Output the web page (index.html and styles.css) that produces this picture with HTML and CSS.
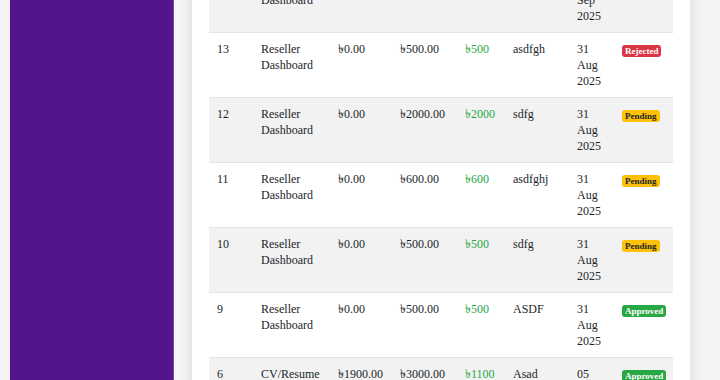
FILE: index.html
```html
<!DOCTYPE html>
<html>
<head>
<meta charset="utf-8">
<link rel="stylesheet" href="styles.css">
</head>
<body>
<div class="layout">
  <aside class="sidebar"></aside>
  <main class="main">
    <div class="card">
      <table class="orders">
        <colgroup>
          <col class="c-id"><col class="c-svc"><col class="c-paid"><col class="c-total"><col class="c-due"><col class="c-name"><col class="c-date"><col class="c-status">
        </colgroup>
        <tbody>
          <tr class="striped"><td>14</td><td>Reseller Dashboard</td><td>৳0.00</td><td>৳500.00</td><td class="due">৳500</td><td>asdf</td><td>01 Sep 2025</td><td><span class="badge pending">Pending</span></td></tr>
          <tr><td>13</td><td>Reseller Dashboard</td><td>৳0.00</td><td>৳500.00</td><td class="due">৳500</td><td>asdfgh</td><td>31 Aug 2025</td><td><span class="badge rejected">Rejected</span></td></tr>
          <tr class="striped"><td>12</td><td>Reseller Dashboard</td><td>৳0.00</td><td>৳2000.00</td><td class="due">৳2000</td><td>sdfg</td><td>31 Aug 2025</td><td><span class="badge pending">Pending</span></td></tr>
          <tr><td>11</td><td>Reseller Dashboard</td><td>৳0.00</td><td>৳600.00</td><td class="due">৳600</td><td>asdfghj</td><td>31 Aug 2025</td><td><span class="badge pending">Pending</span></td></tr>
          <tr class="striped"><td>10</td><td>Reseller Dashboard</td><td>৳0.00</td><td>৳500.00</td><td class="due">৳500</td><td>sdfg</td><td>31 Aug 2025</td><td><span class="badge pending">Pending</span></td></tr>
          <tr><td>9</td><td>Reseller Dashboard</td><td>৳0.00</td><td>৳500.00</td><td class="due">৳500</td><td>ASDF</td><td>31 Aug 2025</td><td><span class="badge approved">Approved</span></td></tr>
          <tr class="striped"><td>6</td><td>CV/Resume</td><td>৳1900.00</td><td>৳3000.00</td><td class="due">৳1100</td><td>Asad</td><td>05 Aug 2025</td><td><span class="badge approved">Approved</span></td></tr>
        </tbody>
      </table>
    </div>
  </main>
</div>
</body>
</html>
```
FILE: styles.css
```css
* { box-sizing: border-box; }
html, body { margin: 0; padding: 0; }
body {
  background: #f4f4f6;
  font-family: "Liberation Serif", "DejaVu Serif", serif;
  font-size: 12px;
  line-height: 16px;
  color: #212529;
  width: 720px;
  height: 380px;
  overflow: hidden;
}
.layout {
  display: flex;
  height: 380px;
}
.sidebar {
  width: 164px;
  margin-left: 10px;
  background: #54158b;
  border-right: 1px solid #7a3fb0;
  flex: none;
}
.main {
  flex: none;
  padding-left: 18px;
}
.card {
  width: 498px;
  margin-top: -33px;
  background: #fff;
  padding: 0 17px;
  box-shadow: 0 0 12px rgba(0, 0, 0, 0.12);
  height: 460px;
}
.orders {
  width: 464px;
  table-layout: fixed;
  border-collapse: collapse;
}
.c-id { width: 44px; }
.c-svc { width: 77px; }
.c-paid { width: 62px; }
.c-total { width: 65px; }
.c-due { width: 48px; }
.c-name { width: 64px; }
.c-date { width: 45px; }
.c-status { width: 59px; }
.orders td {
  padding: 8px 8px;
  vertical-align: top;
  border-top: 1px solid #e4e4e4;
  height: 65px;
}
.orders tr.striped td { background: #f2f2f2; }
.due { color: #28a745; }
.badge {
  display: inline-block;
  font-weight: bold;
  font-size: 9px;
  line-height: 12px;
  padding: 0 3px;
  border-radius: 3px;
  margin-top: 4px;
  vertical-align: top;
}
.rejected { background: #dc3545; color: #fff; }
.pending { background: #ffc107; color: #212529; }
.approved { background: #28a745; color: #fff; }
```
